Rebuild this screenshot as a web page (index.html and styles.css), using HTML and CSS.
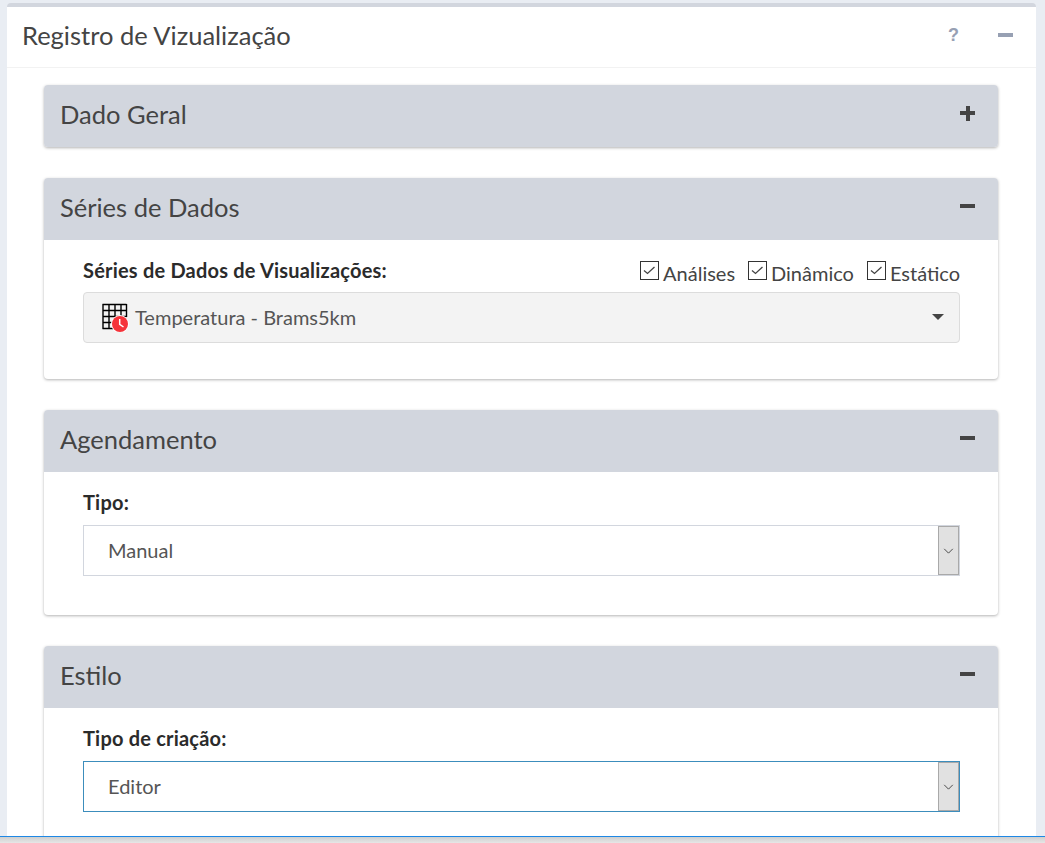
FILE: index.html
```html
<!DOCTYPE html>
<html lang="pt">
<head>
<meta charset="utf-8">
<title>Registro de Vizualização</title>
<link rel="stylesheet" href="styles.css">
</head>
<body>
<div class="viewport">
  <main class="box">
    <header class="box-header">
      <h1>Registro de Vizualização</h1>
      <div class="tools">
        <span class="tool-q">?</span>
        <span class="tool-minus"></span>
      </div>
    </header>
    <div class="box-body">
      <section class="panel collapsed">
        <div class="panel-head"><h2>Dado Geral</h2><span class="plus"></span></div>
      </section>

      <section class="panel">
        <div class="panel-head"><h2>Séries de Dados</h2><span class="minus"></span></div>
        <div class="panel-body series">
          <div class="label-row">
            <label class="field-label">Séries de Dados de Visualizações:</label>
            <div class="checks">
              <span class="check"><svg class="cb" viewBox="0 0 19 19"><rect x="0.5" y="0.5" width="18" height="18" fill="#fff" stroke="#333"/><path d="M4 9.5 L7.5 12.5 L14.5 6" fill="none" stroke="#444" stroke-width="1.3"/></svg>Análises</span>
              <span class="check"><svg class="cb" viewBox="0 0 19 19"><rect x="0.5" y="0.5" width="18" height="18" fill="#fff" stroke="#333"/><path d="M4 9.5 L7.5 12.5 L14.5 6" fill="none" stroke="#444" stroke-width="1.3"/></svg>Dinâmico</span>
              <span class="check"><svg class="cb" viewBox="0 0 19 19"><rect x="0.5" y="0.5" width="18" height="18" fill="#fff" stroke="#333"/><path d="M4 9.5 L7.5 12.5 L14.5 6" fill="none" stroke="#444" stroke-width="1.3"/></svg>Estático</span>
            </div>
          </div>
          <div class="combo">
            <svg class="grid-icon" viewBox="0 0 28 30">
              <path d="M1.5 2.5H25.5M1.5 8.5H25.5M1.5 14.5H25.5M1.5 20.5H18M1.5 26.5H18M2 2V27M8 2V27M14 2V27M20 2V16M25.5 2V15" fill="none" stroke="#000" stroke-width="1.4"/>
              <circle cx="19" cy="22" r="9" fill="#fff"/>
              <circle cx="19" cy="22" r="8" fill="#f5333a"/>
              <path d="M18.7 17V22.3L22.5 25" fill="none" stroke="#fff" stroke-width="1.5"/>
            </svg>
            <span class="combo-text">Temperatura - Brams5km</span>
            <span class="caret"></span>
          </div>
        </div>
      </section>

      <section class="panel">
        <div class="panel-head"><h2>Agendamento</h2><span class="minus"></span></div>
        <div class="panel-body schedule">
          <label class="field-label">Tipo:</label>
          <div class="select">
            <span class="select-text">Manual</span>
            <span class="select-btn"><svg viewBox="0 0 12 7"><path d="M1 1L6 6L11 1" fill="none" stroke="#333" stroke-width="1"/></svg></span>
          </div>
        </div>
      </section>

      <section class="panel">
        <div class="panel-head"><h2>Estilo</h2><span class="minus"></span></div>
        <div class="panel-body schedule">
          <label class="field-label">Tipo de criação:</label>
          <div class="select focused">
            <span class="select-text">Editor</span>
            <span class="select-btn"><svg viewBox="0 0 12 7"><path d="M1 1L6 6L11 1" fill="none" stroke="#333" stroke-width="1"/></svg></span>
          </div>
        </div>
      </section>
    </div>
  </main>
</div>
<div class="bottom-strip"></div>
</body>
</html>
```
FILE: styles.css
```css
* { box-sizing: border-box; }
html, body { margin: 0; height: 843px; overflow: hidden; }
body {
  background: #e9edf3;
  font-family: "Lato", "Noto Sans", sans-serif;
  color: #444;
  display: flex;
  flex-direction: column;
}
.viewport {
  height: 836px;
  overflow: hidden;
  padding: 3px 9px 0 7px;
  flex: none;
}
.box {
  background: #fff;
  border-top: 4px solid #d2d6de;
  border-radius: 4px 4px 0 0;
  height: 900px;
}
.box-header {
  height: 61px;
  border-bottom: 1px solid #f2f2f2;
  display: flex;
  align-items: center;
  justify-content: space-between;
  padding: 0 23px 2px 15px;
}
.box-header h1 {
  margin: 0;
  font-size: 25.5px;
  font-weight: 400;
  color: #444;
  line-height: 1;
}
.tools { display: flex; align-items: center; gap: 39px; margin-bottom: 2px; }
.tool-q {
  font-family: "Liberation Sans", sans-serif;
  font-weight: 700;
  font-size: 18px;
  color: #97a0b3;
  line-height: 1;
}
.tool-minus { width: 15px; height: 4px; background: #97a0b3; }
.box-body { padding: 17px 38px 0 37px; display: flex; flex-direction: column; gap: 31px; }
.panel {
  background: #fff;
  border-radius: 4px;
  box-shadow: 0 1px 3px rgba(0,0,0,0.3);
}
.panel-head {
  height: 62px;
  background: #d2d6de;
  border-radius: 4px 4px 0 0;
  display: flex;
  align-items: center;
  justify-content: space-between;
  padding: 0 23px 6px 16px;
}
.collapsed .panel-head { border-radius: 4px; }
.panel-head h2 {
  margin: 4px 0 0;
  font-size: 25.5px;
  font-weight: 400;
  color: #444;
  line-height: 1;
}
.minus { width: 15px; height: 3.5px; background: #444; }
.plus { width: 15px; height: 15px; background:
  linear-gradient(#444,#444) center/15px 4px no-repeat,
  linear-gradient(#444,#444) center/4px 15px no-repeat; }
.panel-body { padding: 0 38px 0 39px; }
.series { height: 139px; padding-top: 19px; }
.schedule { height: 143px; padding-top: 19px; }
.label-row { display: flex; justify-content: space-between; height: 33px; }
.field-label {
  display: block;
  font-weight: 700;
  font-size: 20px;
  letter-spacing: 0.2px;
  color: #2b2b2b;
  line-height: 22px;
}
.checks { display: flex; gap: 13px; margin-top: 2px; }
.check { display: flex; align-items: flex-start; font-size: 20px; color: #444; line-height: 24px; gap: 4px; }
.cb { width: 19px; height: 19px; flex: none; }
.combo {
  height: 51px;
  background: #f3f3f3;
  border: 1px solid #dcdcdc;
  border-radius: 4px;
  display: flex;
  align-items: center;
  padding: 0 15px 2px 17px;
}
.grid-icon { width: 28px; height: 30px; flex: none; margin-right: 6px; }
.combo-text { flex: 1; font-size: 20px; color: #555; }
.caret { width: 0; height: 0; border-left: 6.5px solid transparent; border-right: 6.5px solid transparent; border-top: 6.5px solid #444; }
.schedule .field-label { margin-bottom: 12px; }
.select {
  height: 51px;
  border: 1px solid #d2d6de;
  display: flex;
  align-items: stretch;
}
.select-text { flex: 1; font-size: 20px; color: #555; padding: 0 0 2px 24px; align-self: center; }
.select-btn {
  width: 21px;
  background: #e1e1e1;
  border: 1px solid #a9a9a9;
  display: flex;
  align-items: center;
  justify-content: center;
}
.select-btn svg { width: 11px; height: 6px; }
.focused { border-color: #3c8dbc; }
.bottom-strip {
  flex: 1;
  border-top: 1px solid #1e88e5;
  background: linear-gradient(#cfcfcf, #e6e6e6);
}
```
